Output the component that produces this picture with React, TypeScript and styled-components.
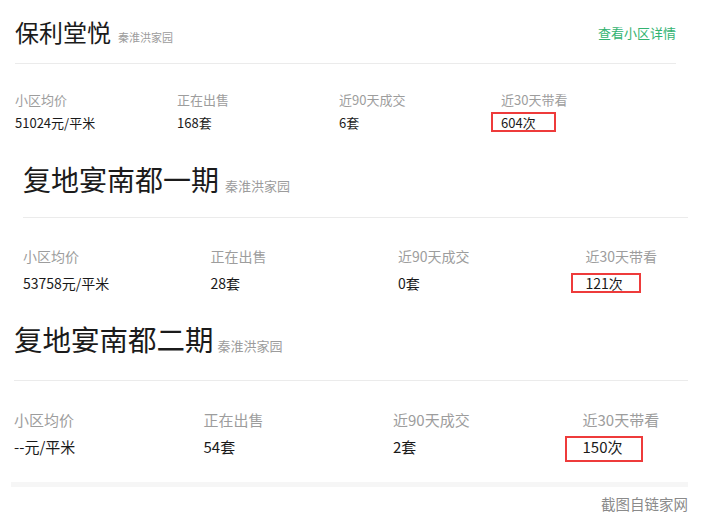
import styled, { createGlobalStyle } from 'styled-components';

const GlobalStyle = createGlobalStyle`
  html, body {
    margin: 0;
    padding: 0;
    background: #fff;
  }
  body {
    font-family: "Noto Sans CJK SC", "Noto Sans", sans-serif;
    color: #222;
    overflow: hidden;
  }
`;

const Page = styled.div`
  width: 709px;
  height: 526px;
  display: flex;
  flex-direction: column;
`;

const Card = styled.section<{ $left: number; $right: number; $top: number }>`
  margin-top: ${(p) => p.$top}px;
  margin-left: ${(p) => p.$left}px;
  width: ${(p) => p.$right - p.$left}px;
  display: flex;
  flex-direction: column;
`;

const Header = styled.div`
  display: flex;
  align-items: center;
  justify-content: space-between;
`;

const TitleGroup = styled.div`
  display: flex;
  align-items: baseline;
`;

const Title = styled.h2<{ $size: number }>`
  margin: 0;
  font-weight: 400;
  font-size: ${(p) => p.$size}px;
  line-height: 1;
  color: #1b1b1b;
`;

const Area = styled.span<{ $size: number; $gap: number }>`
  margin-left: ${(p) => p.$gap}px;
  font-size: ${(p) => p.$size}px;
  line-height: 1;
  color: #9c9c9c;
`;

const DetailLink = styled.a`
  font-size: 13px;
  line-height: 13px;
  color: #33b371;
  text-decoration: none;
`;

const Divider = styled.div<{ $gap: number }>`
  margin-top: ${(p) => p.$gap}px;
  height: 1px;
  background: #ebebeb;
`;

const Stats = styled.div<{ $gap: number; $col: number }>`
  margin-top: ${(p) => p.$gap}px;
  display: grid;
  grid-template-columns: repeat(3, ${(p) => p.$col}px) 1fr;
`;

const Stat = styled.div`
  display: flex;
  flex-direction: column;
  align-items: flex-start;
`;

const Label = styled.div<{ $size: number }>`
  font-size: ${(p) => p.$size}px;
  line-height: 1;
  color: #9d9d9d;
`;

type Box = { l: number; t: number; w: number; h: number };

const Value = styled.div<{ $size: number; $gap: number; $box?: Box }>`
  position: relative;
  margin-top: ${(p) => p.$gap}px;
  font-size: ${(p) => p.$size}px;
  line-height: 1;
  color: #1a1a1a;

  ${(p) =>
    p.$box &&
    `
    &::after {
      content: '';
      position: absolute;
      left: ${p.$box.l}px;
      top: ${p.$box.t}px;
      width: ${p.$box.w}px;
      height: ${p.$box.h}px;
      box-sizing: border-box;
      border: 2px solid #ee3b3b;
    }
  `}
`;

const Band = styled.div`
  margin-top: 28.5px;
  margin-left: 11px;
  width: 677px;
  height: 5px;
  background: #f6f6f6;
`;

const Credit = styled.div`
  margin-top: 9.5px;
  width: 688px;
  text-align: right;
  font-size: 14.5px;
  line-height: 1;
  color: #8a8a8a;
`;

type Estate = {
  name: string;
  area: string;
  price: string;
  onSale: string;
  deals: string;
  visits: string;
};

type Look = {
  left: number;
  right: number;
  top: number;
  titleSize: number;
  areaSize: number;
  areaGap: number;
  dividerGap: number;
  statsGap: number;
  col: number;
  labelSize: number;
  valueGap: number;
  box: Box;
  link?: boolean;
};

const estates: { data: Estate; look: Look }[] = [
  {
    data: { name: '保利堂悦', area: '秦淮洪家园', price: '51024元/平米', onSale: '168套', deals: '6套', visits: '604次' },
    look: {
      left: 15, right: 676, top: 20, titleSize: 24, areaSize: 11, areaGap: 7, dividerGap: 19,
      statsGap: 29, col: 162, labelSize: 13, valueGap: 10, box: { l: -10, t: -4, w: 65, h: 20 }, link: true,
    },
  },
  {
    data: { name: '复地宴南都一期', area: '秦淮洪家园', price: '53758元/平米', onSale: '28套', deals: '0套', visits: '121次' },
    look: {
      left: 23, right: 688, top: 36, titleSize: 28, areaSize: 13, areaGap: 6, dividerGap: 24,
      statsGap: 30.5, col: 187.5, labelSize: 14, valueGap: 13, box: { l: -15, t: -2.5, w: 70, h: 20 },
    },
  },
  {
    data: { name: '复地宴南都二期', area: '秦淮洪家园', price: '--元/平米', onSale: '54套', deals: '2套', visits: '150次' },
    look: {
      left: 14, right: 688, top: 35.5, titleSize: 28.5, areaSize: 13, areaGap: 4, dividerGap: 26.5,
      statsGap: 30.5, col: 189.5, labelSize: 15, valueGap: 12, box: { l: -18, t: -2.5, w: 78, h: 26 },
    },
  },
];

function EstateCard({ data, look }: { data: Estate; look: Look }) {
  const stats = [
    ['小区均价', data.price],
    ['正在出售', data.onSale],
    ['近90天成交', data.deals],
    ['近30天带看', data.visits],
  ];
  return (
    <Card $left={look.left} $right={look.right} $top={look.top}>
      <Header>
        <TitleGroup>
          <Title $size={look.titleSize}>{data.name}</Title>
          <Area $size={look.areaSize} $gap={look.areaGap}>{data.area}</Area>
        </TitleGroup>
        {look.link && <DetailLink href="#">查看小区详情</DetailLink>}
      </Header>
      <Divider $gap={look.dividerGap} />
      <Stats $gap={look.statsGap} $col={look.col}>
        {stats.map(([label, value], i) => (
          <Stat key={label}>
            <Label $size={look.labelSize}>{label}</Label>
            <Value $size={look.labelSize} $gap={look.valueGap} $box={i === 3 ? look.box : undefined}>
              {value}
            </Value>
          </Stat>
        ))}
      </Stats>
    </Card>
  );
}

export default function App() {
  return (
    <>
      <GlobalStyle />
      <Page>
        {estates.map((e) => (
          <EstateCard key={e.data.name} data={e.data} look={e.look} />
        ))}
        <Band />
        <Credit>截图自链家网</Credit>
      </Page>
    </>
  );
}
